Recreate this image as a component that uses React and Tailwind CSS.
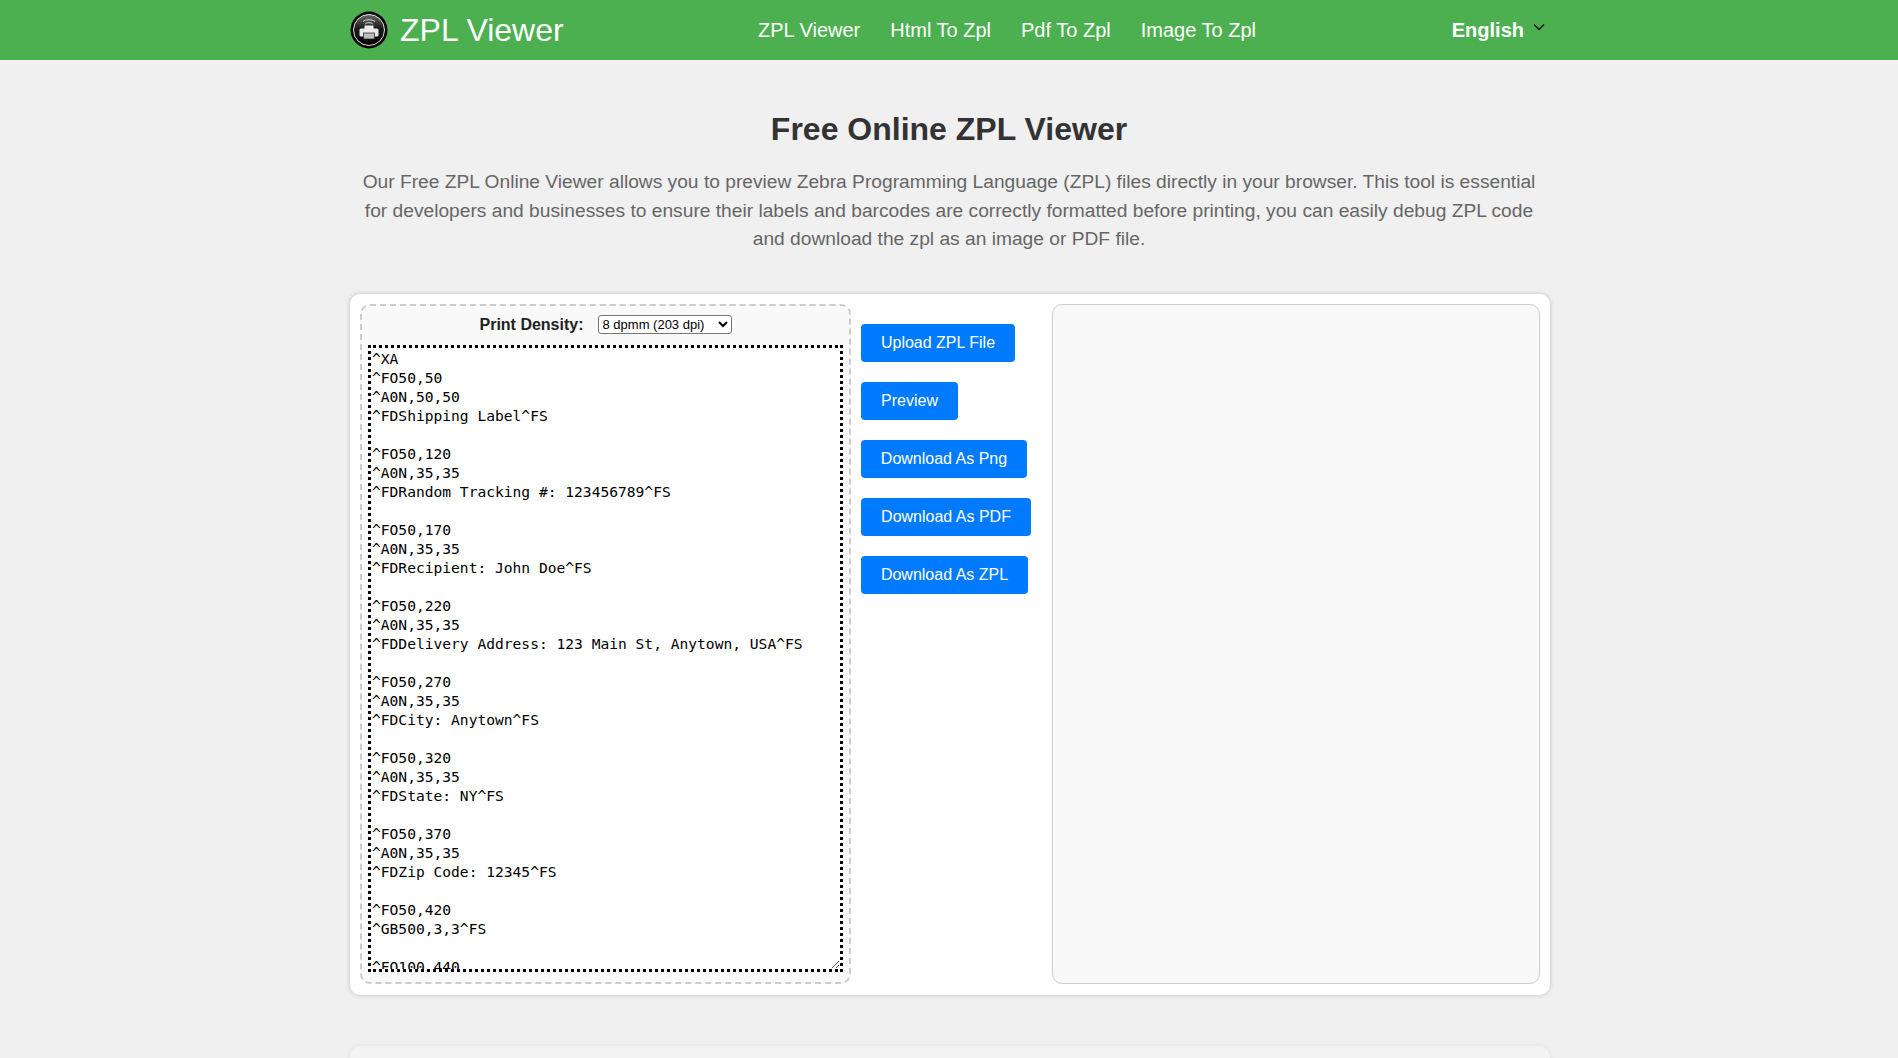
const zpl = `^XA
^FO50,50
^A0N,50,50
^FDShipping Label^FS

^FO50,120
^A0N,35,35
^FDRandom Tracking #: 123456789^FS

^FO50,170
^A0N,35,35
^FDRecipient: John Doe^FS

^FO50,220
^A0N,35,35
^FDDelivery Address: 123 Main St, Anytown, USA^FS

^FO50,270
^A0N,35,35
^FDCity: Anytown^FS

^FO50,320
^A0N,35,35
^FDState: NY^FS

^FO50,370
^A0N,35,35
^FDZip Code: 12345^FS

^FO50,420
^GB500,3,3^FS

^FO100,440
^BCN,100,Y,N,N
^FD123456789^FS

^XZ`;

const buttons = [
  ["Upload ZPL File", "w-[154px]"],
  ["Preview", "w-[97px]"],
  ["Download As Png", "w-[166px]"],
  ["Download As PDF", "w-[170px]"],
  ["Download As ZPL", "w-[167px]"],
];

function Logo() {
  return (
    <svg width="38" height="38" viewBox="0 0 38 38" className="shrink-0">
      <defs>
        <linearGradient id="lg" x1="0" y1="0" x2="0" y2="1">
          <stop offset="0" stopColor="#6a6a6a" />
          <stop offset="0.45" stopColor="#1c1c1c" />
          <stop offset="1" stopColor="#000" />
        </linearGradient>
      </defs>
      <circle cx="19" cy="19" r="18.5" fill="#050505" />
      <circle cx="19" cy="19" r="15.5" fill="url(#lg)" stroke="#f0f0f0" strokeWidth="0.9" />
      <path d="M13 10.5 a9 7 0 0 1 12 0" fill="none" stroke="#ddd" strokeWidth="1" />
      <path d="M15.2 13 a5 4 0 0 1 7.6 0" fill="none" stroke="#ddd" strokeWidth="1" />
      <rect x="14.5" y="14.5" width="9" height="4" fill="#eee" />
      <rect x="9.5" y="17.5" width="19" height="8" rx="1.5" fill="#eaeaea" />
      <rect x="13.5" y="22" width="11" height="6" fill="#bdbdbd" stroke="#222" strokeWidth="0.7" />
    </svg>
  );
}

export default function App() {
  return (
    <div className="h-[1058px] overflow-hidden bg-[#f0f0f0] font-['Liberation_Sans',Arial,sans-serif]">
      <header className="h-[60px] bg-[#4caf50] text-white">
        <div className="ml-[350px] flex h-full w-[1200px] items-center">
          <div className="flex w-[408px] items-center gap-[12px]">
            <Logo />
            <span className="text-[32px] leading-none">ZPL Viewer</span>
          </div>
          <nav className="flex gap-[30px] text-[20px]">
            <span>ZPL Viewer</span>
            <span>Html To Zpl</span>
            <span>Pdf To Zpl</span>
            <span>Image To Zpl</span>
          </nav>
          <div className="ml-auto flex items-center gap-[9px] pr-[5px]">
            <span className="text-[20px] font-bold">English</span>
            <svg width="12" height="8" viewBox="0 0 12 8" className="mb-[6px]" fill="none" stroke="#111" strokeWidth="1.4">
              <path d="M1 1.5 6 6.5 11 1.5" />
            </svg>
          </div>
        </div>
      </header>

      <main className="ml-[350px] w-[1200px]">
        <h1 className="mt-[48px] pr-[2px] text-center text-[32px] leading-[42px] font-bold text-[#333]">Free Online ZPL Viewer</h1>
        <p className="mt-[18px] pr-[2px] text-center text-[19.2px] leading-[28.5px] text-[#666]">
          Our Free ZPL Online Viewer allows you to preview Zebra Programming Language (ZPL) files directly in your browser. This tool is essential for developers and businesses to ensure their labels and barcodes are correctly formatted before printing, you can easily debug ZPL code and download the zpl as an image or PDF file.
        </p>

        <section className="mt-[40px] flex h-[701px] gap-[10px] rounded-[10px] bg-white px-[10px] pt-[10px] pb-[11px] shadow-[0_0_5px_rgba(0,0,0,0.2)]">
          <div className="flex w-[491px] shrink-0 flex-col rounded-[10px] border-2 border-dashed border-[#ccc] bg-[#f9f9f9] px-[6px] pt-[9px] pb-[10px]">
            <div className="flex h-[19px] items-center justify-center gap-[14px]">
              <label className="pt-[2px] text-[16px] font-bold text-[#222]">Print Density:</label>
              <select className="h-[19px] w-[134px] rounded-[3px] border border-[#767676] bg-white text-[13px] text-black">
                <option>8 dpmm (203 dpi)</option>
              </select>
            </div>
            <textarea
              readOnly
              defaultValue={zpl}
              spellCheck={false}
              className="mt-[11px] block w-full min-h-0 flex-1 resize overflow-hidden border-[3px] border-dotted border-black bg-white pl-[1px] pr-[2px] pt-[1px] pb-[2px] font-['DejaVu_Sans_Mono',monospace] text-[14.6px] leading-[19px] text-black outline-none"
            />
          </div>

          <div className="flex w-[181px] shrink-0 flex-col items-start gap-[20px] pt-[20px]">
            {buttons.map(([label, w]) => (
              <button key={label} className={`h-[38px] rounded-[4px] bg-[#007bff] text-center text-[16px] text-white ${w}`}>
                {label}
              </button>
            ))}
          </div>

          <div className="flex-1 rounded-[10px] border border-[#ccc] bg-[#f9f9f9]" />
        </section>

        <section className="mt-[51px] h-[200px] rounded-[10px] bg-[#f3f3f3] shadow-[0_0_5px_rgba(0,0,0,0.08)]" />
      </main>
    </div>
  );
}
